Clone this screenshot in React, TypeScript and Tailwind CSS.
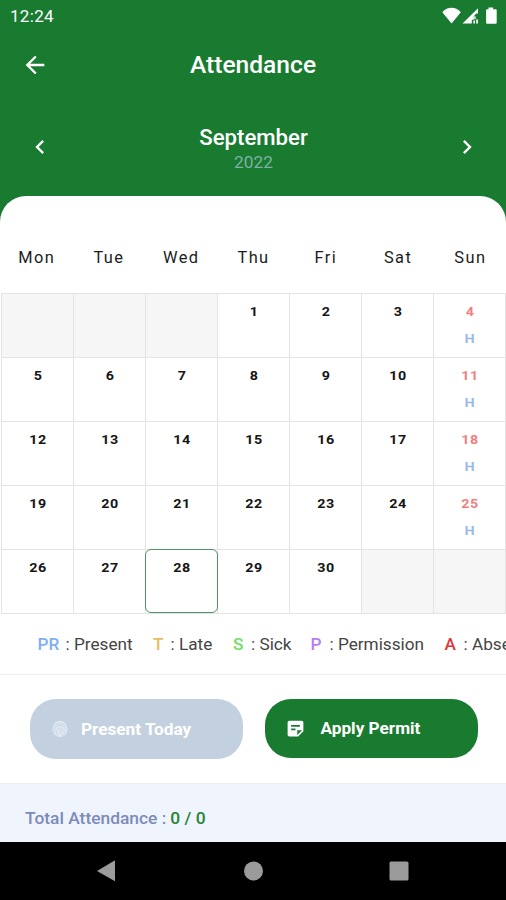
import { MdArrowBack, MdChevronLeft, MdChevronRight, MdStickyNote2 } from 'react-icons/md';

const WEEKDAYS = ['Mon', 'Tue', 'Wed', 'Thu', 'Fri', 'Sat', 'Sun'];
const LEADING_BLANKS = 3;
const DAYS_IN_MONTH = 30;
const TODAY = 28;

const LEGEND = [
  { code: 'PR', label: 'Present', color: 'text-[#7fb0f5]', width: 'w-[115.5px]', gap: 'w-[28px]' },
  { code: 'T', label: 'Late', color: 'text-[#e8bd62]', width: 'w-[80px]', gap: 'w-[17.5px]' },
  { code: 'S', label: 'Sick', color: 'text-[#74dc63]', width: 'w-[77.5px]', gap: 'w-[18px]' },
  { code: 'P', label: 'Permission', color: 'text-[#b67cf0]', width: 'w-[134px]', gap: 'w-[19px]' },
  { code: 'A', label: 'Absent', color: 'text-[#e2343c]', width: 'w-[100px]', gap: 'w-[19px]' },
];

function StatusBar() {
  return (
    <div className="flex h-8 items-center justify-between pl-[10px] pr-[8px] pt-px">
      <span className="text-[17px] tracking-[0.3px]">12:24</span>
      <svg width="56" height="20" viewBox="0 0 56 20" fill="currentColor" className="-mt-0.5">
        <path d="M0.3 6.2C5.5 0.4 13.6 0.4 18.8 6.2L9.6 17.4Z" />
        <path d="M20.5 17.6L36 2.2v5.4h-1.8l-2.4 2.6v3.6h-2v3.8z" />
        <path d="M32.2 10.2h1.4v3h-1.4zM31.4 14.4h1.6v3.2h-1.6zM34.2 13.4h1.8v4.2h-1.8z" />
        <path d="M46.5 1.4h4.6v1.8h2.6q1 0 1 1v12.4q0 1.2-1 1.2h-8.6q-1 0-1-1.2V4.2q0-1 1-1h1.4z" />
      </svg>
    </div>
  );
}

function FingerprintIcon() {
  return (
    <svg width="20" height="20" viewBox="0 0 20 20" fill="none">
      <ellipse cx="10" cy="10" rx="7.6" ry="8.3" fill="#dde6f1" />
      <g stroke="#c9d5e4" strokeWidth="0.9" strokeLinecap="round">
        <path d="M4 7.5C7 3.6 13 3.6 16 7.5" />
        <path d="M4.5 13C4 8 7 6.4 10 6.4S16 9 15.6 11.4" />
        <path d="M7 15.5C5.6 11 8 9 10 9.2s3 2.4 5 4.8" />
        <path d="M10 11.5c.3 2.4 1.6 4 3.4 4.8" />
      </g>
    </svg>
  );
}

function Calendar() {
  const cells = Array.from({ length: 35 }, (_, i) => i - LEADING_BLANKS + 1);

  return (
    <div>
      <div className="grid h-[97px] grid-cols-7 pt-[50px]">
        {WEEKDAYS.map((day) => (
          <div key={day} className="pl-px text-center text-[16.4px] leading-[23px] tracking-[1.4px] text-[#1c1c1c]">
            {day}
          </div>
        ))}
      </div>
      <div className="ml-px grid auto-rows-[64px] grid-cols-7 border-b border-l border-[#e4e4e4]">
        {cells.map((day, i) => {
          const sunday = i % 7 === 6;
          if (day < 1 || day > DAYS_IN_MONTH) {
            return <div key={i} className="border-r border-t border-[#e4e4e4] bg-[#f6f6f6]" />;
          }
          return (
            <div key={i} className="relative flex flex-col items-center border-r border-t border-[#e4e4e4] pt-[9px]">
              {day === TODAY && (
                <div className="absolute -left-px -right-px -top-px bottom-0 rounded-[6px] border border-[#4f9462]" />
              )}
              <span
                className={`scale-x-110 pl-px text-[13px] font-bold leading-[18px] tracking-[0.6px] ${sunday ? 'text-[#f27f80]' : 'text-[#161616]'}`}
              >
                {day}
              </span>
              {sunday && (
                <span className="mt-[9px] scale-x-110 text-[13px] font-bold leading-[18px] text-[#99bcec]">H</span>
              )}
            </div>
          );
        })}
      </div>
    </div>
  );
}

export default function App() {
  return (
    <div className="flex h-[900px] w-[506px] flex-col overflow-hidden bg-[#187b30] font-[Roboto,sans-serif] text-white">
      <StatusBar />

      {/* Title bar */}
      <header className="grid h-[66px] grid-cols-[70px_1fr_70px] items-center">
        <MdArrowBack className="ml-[21px] size-7" />
        <h1 className="pt-px text-center text-[24.6px] font-medium">Attendance</h1>
      </header>

      {/* Month switcher */}
      <div className="flex h-[98px] items-center justify-between px-[25px]">
        <MdChevronLeft className="ml-px size-7" />
        <div className="pt-[4px] text-center">
          <div className="text-[22.2px] font-medium leading-[26px]">September</div>
          <div className="text-[17.3px] leading-[24px] text-[#7fb0a5]">2022</div>
        </div>
        <MdChevronRight className="size-7" />
      </div>

      <main className="flex h-[646px] flex-col rounded-t-[26px] bg-white">
        <Calendar />

        <div className="flex h-[61px] shrink-0 items-center overflow-hidden border-b border-[#ededed] pl-[37.5px] pt-px text-[17.2px] text-[#454545]">
          {LEGEND.map((item) => (
            <div key={item.code} className={`flex shrink-0 whitespace-pre ${item.width}`}>
              <span className={`shrink-0 font-medium ${item.color} ${item.gap}`}>{item.code}</span>
              <span>: {item.label}</span>
            </div>
          ))}
        </div>

        <div className="flex h-[109px] shrink-0 gap-[21.5px] border-b border-[#ececec] px-[30px] pt-[24px] text-[17.2px] font-bold">
          <button className="flex h-[60px] w-[213px] shrink-0 items-center rounded-[26px] bg-[#c3d0e0] pl-[20px]">
            <FingerprintIcon />
            <span className="ml-[11px] pt-px">Present Today</span>
          </button>
          <button className="flex h-[59px] w-[213px] shrink-0 items-center rounded-[26px] bg-[#187b30] pl-[20px]">
            <MdStickyNote2 className="size-[21px]" />
            <span className="ml-[15px] pt-px">Apply Permit</span>
          </button>
        </div>

        <div className="flex grow items-center bg-[#f0f4fd] pl-[25px] pt-[11px] text-[17.4px] font-medium text-[#7b8cb8]">
          Total Attendance :<span className="ml-1 text-[#228334]">0 / 0</span>
        </div>
      </main>

      {/* System navigation */}
      <nav className="h-[58px] bg-black">
        <svg width="506" height="58" viewBox="0 0 506 58" fill="#9b9b9b">
          <path d="M97 29L115 18.3v21z" />
          <circle cx="253.5" cy="29" r="9.5" />
          <rect x="389.5" y="19.5" width="19" height="19" rx="1.5" />
        </svg>
      </nav>
    </div>
  );
}
